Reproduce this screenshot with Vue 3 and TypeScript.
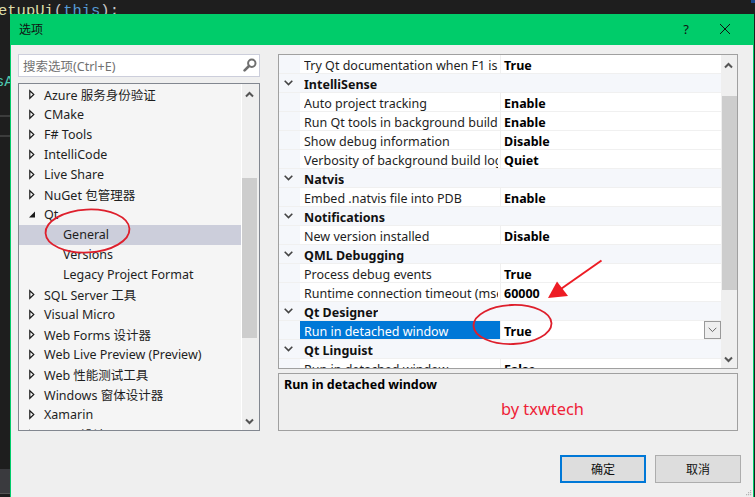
<script setup lang="ts">
interface TreeItem { label: string; level: number; arrow: 'closed' | 'open' | 'none'; selected?: boolean }
interface GridRow { name: string; value?: string; category?: boolean; selected?: boolean }

const tree: TreeItem[] = [
  { label: 'Azure 服务身份验证', level: 0, arrow: 'closed' },
  { label: 'CMake', level: 0, arrow: 'closed' },
  { label: 'F# Tools', level: 0, arrow: 'closed' },
  { label: 'IntelliCode', level: 0, arrow: 'closed' },
  { label: 'Live Share', level: 0, arrow: 'closed' },
  { label: 'NuGet 包管理器', level: 0, arrow: 'closed' },
  { label: 'Qt', level: 0, arrow: 'open' },
  { label: 'General', level: 1, arrow: 'none', selected: true },
  { label: 'Versions', level: 1, arrow: 'none' },
  { label: 'Legacy Project Format', level: 1, arrow: 'none' },
  { label: 'SQL Server 工具', level: 0, arrow: 'closed' },
  { label: 'Visual Micro', level: 0, arrow: 'closed' },
  { label: 'Web Forms 设计器', level: 0, arrow: 'closed' },
  { label: 'Web Live Preview (Preview)', level: 0, arrow: 'closed' },
  { label: 'Web 性能测试工具', level: 0, arrow: 'closed' },
  { label: 'Windows 窗体设计器', level: 0, arrow: 'closed' },
  { label: 'Xamarin', level: 0, arrow: 'closed' },
  { label: 'XAML 设计器', level: 0, arrow: 'closed' },
]

const rows: GridRow[] = [
  { name: 'Try Qt documentation when F1 is pressed', value: 'True' },
  { name: 'IntelliSense', category: true },
  { name: 'Auto project tracking', value: 'Enable' },
  { name: 'Run Qt tools in background build', value: 'Enable' },
  { name: 'Show debug information', value: 'Disable' },
  { name: 'Verbosity of background build log', value: 'Quiet' },
  { name: 'Natvis', category: true },
  { name: 'Embed .natvis file into PDB', value: 'Enable' },
  { name: 'Notifications', category: true },
  { name: 'New version installed', value: 'Disable' },
  { name: 'QML Debugging', category: true },
  { name: 'Process debug events', value: 'True' },
  { name: 'Runtime connection timeout (msec)', value: '60000' },
  { name: 'Qt Designer', category: true },
  { name: 'Run in detached window', value: 'True', selected: true },
  { name: 'Qt Linguist', category: true },
  { name: 'Run in detached window', value: 'False' },
]
</script>

<template>
  <div class="desktop">
    <div class="code code-top"><span class="fn">etupUi</span><span class="punct">(</span><span class="kw">this</span><span class="punct">);</span></div>
    <div class="code code-side">sA</div>
    <i class="strip strip-a"></i>
    <i class="strip strip-b"></i>
    <i class="strip-panel"></i>
    <i class="corner"></i>

    <section class="dialog">
      <header class="titlebar">
        <span class="title">选项</span>
        <span class="help">?</span>
        <svg class="close" width="12" height="12" viewBox="0 0 12 12">
          <path d="M1 1 L11 11 M11 1 L1 11" stroke="#111" stroke-width="1" fill="none" />
        </svg>
      </header>

      <div class="body">
        <div class="panes">
          <div class="left">
            <div class="search">
              <span class="placeholder">搜索选项(Ctrl+E)</span>
              <svg class="lens" width="14" height="14" viewBox="0 0 14 14">
                <circle cx="8.8" cy="5.2" r="3.7" fill="none" stroke="#6f6f6f" stroke-width="2" />
                <path d="M6 8 L1.6 12.4" stroke="#6f6f6f" stroke-width="2.6" stroke-linecap="round" />
              </svg>
            </div>
            <div class="tree">
              <div class="tree-items">
                <div
                  v-for="item in tree"
                  :key="item.label"
                  class="tree-row"
                  :class="{ selected: item.selected, child: item.level === 1 }"
                >
                  <svg v-if="item.arrow === 'closed'" class="arrow" width="7" height="11" viewBox="0 0 7 11">
                    <path d="M0.8 1.7 L4.8 5.5 L0.8 9.3 Z" fill="#fff" stroke="#1a1a1a" stroke-width="1.2" />
                  </svg>
                  <svg v-else-if="item.arrow === 'open'" class="arrow" width="7" height="11" viewBox="0 0 7 11">
                    <path d="M0 8.5 L6 8.5 L6 2.5 Z" fill="#1a1a1a" />
                  </svg>
                  <span class="tree-label">{{ item.label }}</span>
                </div>
              </div>
              <div class="vbar tree-bar">
                <svg class="chev" width="9" height="7" viewBox="0 0 9 7"><path d="M1 5.5 L4.5 2 L8 5.5" fill="none" stroke="#555" stroke-width="2" /></svg>
                <div class="thumb tree-thumb"></div>
                <svg class="chev chev-end" width="9" height="7" viewBox="0 0 9 7"><path d="M1 1.5 L4.5 5 L8 1.5" fill="none" stroke="#555" stroke-width="2" /></svg>
              </div>
            </div>
          </div>

          <div class="right">
            <div class="grid">
              <div class="grid-rows">
                <div
                  v-for="(row, i) in rows"
                  :key="i"
                  class="grid-row"
                  :class="{ category: row.category, selected: row.selected }"
                >
                  <div class="gutter">
                    <svg v-if="row.category" width="9" height="6" viewBox="0 0 9 6"><path d="M0.7 0.8 L4.5 4.6 L8.3 0.8" fill="none" stroke="#444" stroke-width="1.6" /></svg>
                  </div>
                  <div class="name"><span class="name-text">{{ row.name }}</span></div>
                  <div v-if="!row.category" class="value">
                    <span class="value-text">{{ row.value }}</span>
                    <span v-if="row.selected" class="dropdown">
                      <svg width="9" height="6" viewBox="0 0 9 6"><path d="M0.7 0.8 L4.5 4.6 L8.3 0.8" fill="none" stroke="#666" stroke-width="1" /></svg>
                    </span>
                  </div>
                </div>
              </div>
              <div class="vbar grid-bar">
                <svg class="chev" width="9" height="7" viewBox="0 0 9 7"><path d="M1 5.5 L4.5 2 L8 5.5" fill="none" stroke="#555" stroke-width="2" /></svg>
                <div class="thumb grid-thumb"></div>
                <svg class="chev chev-end" width="9" height="7" viewBox="0 0 9 7"><path d="M1 1.5 L4.5 5 L8 1.5" fill="none" stroke="#555" stroke-width="2" /></svg>
              </div>
            </div>
            <div class="desc">
              <strong class="desc-title">Run in detached window</strong>
            </div>
          </div>
        </div>

        <div class="actions">
          <button class="btn primary" type="button">确定</button>
          <button class="btn" type="button">取消</button>
        </div>
        <svg class="grip" width="6" height="6" viewBox="0 0 6 6">
          <path d="M4 0h1.2v1.2H4zM2 2h1.2v1.2H2zM4 2h1.2v1.2H4zM0 4h1.2v1.2H0zM2 4h1.2v1.2H2zM4 4h1.2v1.2H4z" fill="#b5b5b5" />
        </svg>
      </div>
    </section>

    <span class="signature">by txwtech</span>

    <svg class="marks" width="755" height="497" viewBox="0 0 755 497">
      <ellipse cx="87.5" cy="231" rx="42" ry="21.5" transform="rotate(-3 87.5 231)" fill="none" stroke="#de1f2c" stroke-width="1.8" />
      <ellipse cx="512.5" cy="324.5" rx="39" ry="19.5" transform="rotate(-2 512.5 324.5)" fill="none" stroke="#de1f2c" stroke-width="1.8" />
      <path d="M601.5 260.5 L558 291" stroke="#ed1c24" stroke-width="2" fill="none" />
      <path d="M548 298 L557 281.5 L568 296 Z" fill="#ed1c24" />
    </svg>
  </div>
</template>

<style>
html, body { margin: 0; padding: 0; background: #1e1e1e; }
</style>

<style scoped>
.desktop {
  position: relative;
  width: 755px;
  height: 497px;
  overflow: hidden;
  background: #1e1e1e;
  padding: 14px 1px 0 10px;
  box-sizing: border-box;
  font-family: "Noto Sans", "Noto Sans CJK SC", sans-serif;
  font-size: 12.5px;
  color: #1e1e1e;
}
.code {
  position: absolute;
  font-family: "Liberation Mono", monospace;
  font-size: 15.5px;
  line-height: 18px;
  white-space: nowrap;
}
.code-top { left: -2px; top: 2px; }
.fn { color: #dcdcaa; }
.punct { color: #c8c8c8; }
.kw { color: #569cd6; }
.code-side { left: -5px; top: 73px; color: #4ec9b0; }
.strip { position: absolute; left: 0; width: 10px; height: 2px; background: #3c3c3c; }
.strip-a { top: 115px; }
.strip-b { top: 135px; }
.strip-panel { position: absolute; left: 0; top: 469px; width: 10px; height: 24px; background: #3a3a3e; border-bottom: 1px solid #555; }
.corner { position: absolute; right: 0; top: 0; width: 4px; height: 3px; background: #1c4a8c; }

.dialog {
  position: relative;
  width: 744px;
  height: 483px;
  box-sizing: border-box;
  border-left: 1px solid #00cc6a;
  border-right: 1px solid #00cc6a;
  display: flex;
  flex-direction: column;
  background: #efefef;
}
.titlebar {
  height: 31px;
  flex: none;
  box-sizing: border-box;
  background: #00cc6a;
  display: flex;
  align-items: center;
  padding: 0 22px 1px 8px;
  color: #111;
}
.title { font-size: 12px; }
.help { margin-left: auto; margin-right: 30px; font-size: 13px; }
.close { display: block; }

.body { position: relative; flex: 1; padding: 9px 15px 0 7px; min-height: 0; }
.panes { display: flex; gap: 18px; height: 377px; }
.left { width: 242px; display: flex; flex-direction: column; gap: 6px; flex: none; }
.search {
  height: 23px;
  box-sizing: border-box;
  border: 1px solid #ccceDB;
  background: #fff;
  display: flex;
  align-items: center;
  padding: 0 2px 1px 4px;
}
.placeholder { color: #717171; font-size: 12.5px; }
.lens { margin-left: auto; display: block; }

.tree {
  flex: 1;
  min-height: 0;
  box-sizing: border-box;
  border: 1px solid #828790;
  display: flex;
  overflow: hidden;
  background: #f5f5f5;
}
.tree-items { flex: 1; padding-top: 1px; border-right: 1px solid #fff; overflow: hidden; }
.tree-row {
  height: 20px;
  box-sizing: border-box;
  display: flex;
  align-items: center;
  padding: 0 0 2px 10px;
  white-space: nowrap;
}
.tree-row.child { padding-left: 44px; }
.tree-row.selected { background: #cccedb; }
.arrow { flex: none; display: block; margin-top: 1px; }
.tree-label { margin-left: 8px; }
.tree-row.child .tree-label { margin-left: 0; }

.vbar {
  flex: none;
  position: relative;
  background: #efefef;
  display: flex;
  flex-direction: column;
  align-items: center;
}
.tree-bar { width: 17px; }
.grid-bar { width: 16px; }
.chev { position: absolute; top: 7px; left: 3px; display: block; }
.chev-end { top: auto; bottom: 5px; }
.thumb { position: absolute; background: #cdcdcd; }
.tree-thumb { left: 0; right: 2px; top: 94px; height: 160px; }
.grid-thumb { left: 1px; right: 0; top: 41px; height: 194px; }

.right { width: 460px; display: flex; flex-direction: column; gap: 4px; flex: none; }
.grid {
  height: 315px;
  box-sizing: border-box;
  border: 1px solid #a0a0a0;
  display: flex;
  overflow: hidden;
  background: #fff;
}
.grid-rows { flex: 1; overflow: hidden; }
.grid-row {
  height: 19px;
  box-sizing: border-box;
  border-bottom: 1px solid #f0f0f0;
  display: flex;
  align-items: stretch;
  white-space: nowrap;
}
.gutter {
  width: 21px;
  flex: none;
  background: #f5f7fb;
  display: flex;
  align-items: center;
  padding-left: 5px;
  box-sizing: border-box;
}
.name {
  width: 200px;
  flex: none;
  padding-left: 4px;
  box-sizing: border-box;
  overflow: hidden;
  line-height: 22px;
}
.name-text { display: block; width: 194px; overflow: hidden; }
.value {
  flex: 1;
  display: flex;
  align-items: center;
  padding-left: 3px;
  border-left: 1px solid #f0f0f0;
  font-weight: 700;
  color: #000;
  position: relative;
}
.value-text { position: relative; top: 1px; }
.grid-row.category { background: #f5f7fb; }
.grid-row.category .name { font-weight: 700; color: #111; width: auto; }
.grid-row.category .name-text { width: auto; }
.grid-row.selected .name { background: #0078d7; color: #fff; }
.dropdown {
  margin-left: auto;
  margin-right: 0;
  width: 17px;
  height: 18px;
  box-sizing: border-box;
  border: 1px solid #999;
  background: #eee;
  display: flex;
  align-items: center;
  justify-content: center;
}

.desc {
  height: 58px;
  box-sizing: border-box;
  border: 1px solid #a0a0a0;
  padding: 2px 5px;
}
.desc-title { font-weight: 700; color: #000; }

.actions { display: flex; justify-content: flex-end; gap: 9px; margin-top: 24px; margin-right: -3px; }
.btn {
  width: 86px;
  height: 28px;
  box-sizing: border-box;
  border: 1px solid #adadad;
  background: #dddddd;
  font: inherit;
  font-size: 12px;
  color: #111;
  padding: 0;
}
.btn.primary { border: 2px solid #0078d7; }
.grip { position: absolute; right: 1px; bottom: 1px; display: block; }

.signature {
  position: absolute;
  left: 501px;
  top: 398px;
  font-family: "Noto Sans", sans-serif;
  font-size: 16.4px;
  line-height: 22px;
  color: #ee2238;
}
.marks { position: absolute; left: 0; top: 0; pointer-events: none; }
</style>
